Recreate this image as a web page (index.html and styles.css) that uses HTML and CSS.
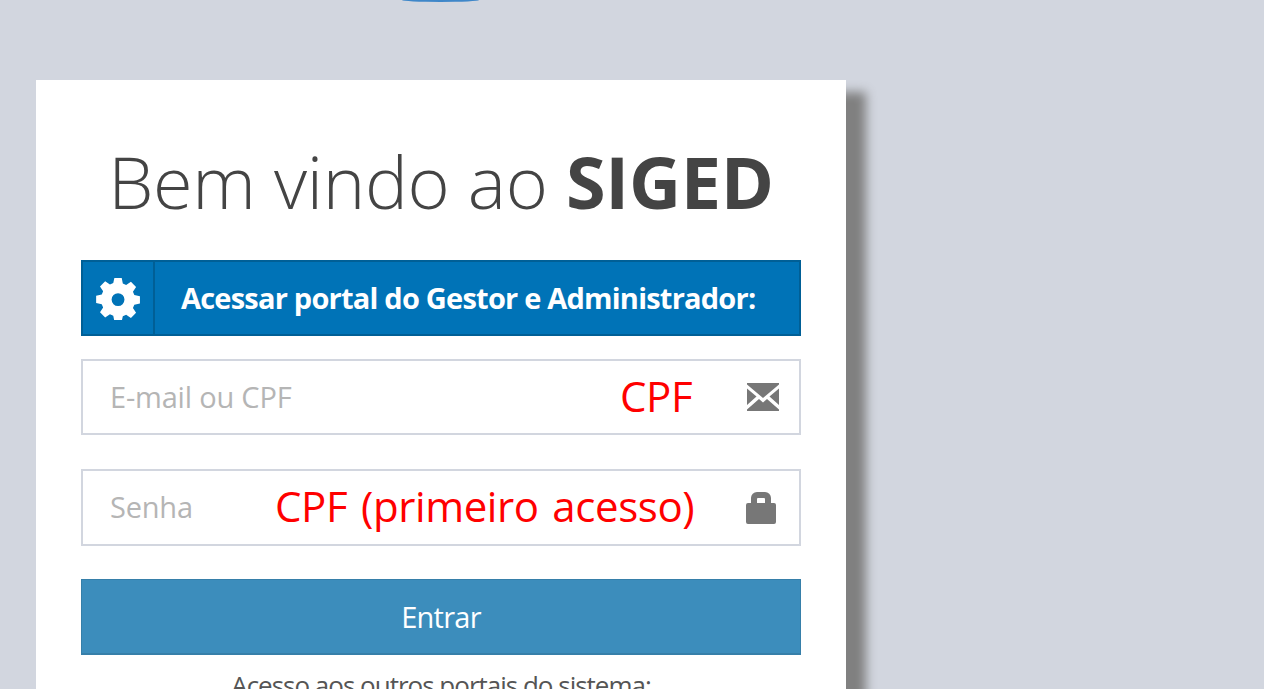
FILE: index.html
```html
<!DOCTYPE html>
<html lang="pt-BR">
<head>
    <meta charset="UTF-8">
    <title>SIGED</title>
    <link rel="stylesheet" href="styles.css">
</head>
<body>
    <div class="logo-edge"></div>

    <div class="login-box">
        <h1 class="login-title">Bem vindo ao <strong>SIGED</strong></h1>

        <div class="portal-bar">
            <span class="portal-icon">
                <svg width="44" height="44" viewBox="0 0 44 44">
                    <path fill="#fff" fill-rule="evenodd" d="M18 0h8l1.200 6.100 3.600 1.500L36 4.200l5.600 5.600-3.400 5.200 1.500 3.600 6.100 1.200v8l-6.100 1.200-1.500 3.600 3.400 5.200-5.600 5.600-5.200-3.400-3.600 1.500L26 47h-8l-1.200-6.100-3.600-1.500L8 42.800 2.400 37.200l3.400-5.200-1.500-3.600L-1.800 27.200v-8l6.100-1.200 1.500-3.600-3.400-5.200L8 3.600l5.200 3.400 3.600-1.500zM22 16.500a7 7 0 1 0 0 14 7 7 0 0 0 0-14z" transform="translate(1.800 2) scale(.92)"/>
                </svg>
            </span>
            <span class="portal-text">Acessar portal do Gestor e Administrador:</span>
        </div>

        <div class="field">
            <span class="field-label">E-mail ou CPF</span>
            <span class="field-note note-email">CPF</span>
            <svg class="field-icon" width="32" height="28" viewBox="0 0 32 28">
                <path fill="#777" d="M0 0h32v1.500L16 15 0 1.500zM0 5.500V22l9.500-8.500zM32 5.500V22l-9.500-8.500zM0 28v-1.500L12 16l4 3.500 4-3.500 12 10.500V28z"/>
            </svg>
        </div>

        <div class="field field-senha">
            <span class="field-label">Senha</span>
            <span class="field-note note-senha">CPF (primeiro acesso)</span>
            <svg class="field-icon icon-lock" width="30" height="32" viewBox="0 0 30 32">
                <path fill="#777" fill-rule="evenodd" d="M5 11V6a6 6 0 0 1 6-6h8a6 6 0 0 1 6 6v5h3a2 2 0 0 1 2 2v17a2 2 0 0 1-2 2H2a2 2 0 0 1-2-2V13a2 2 0 0 1 2-2zm6 0h8V7a1 1 0 0 0-1-1h-6a1 1 0 0 0-1 1z"/>
            </svg>
        </div>

        <button class="btn-enter">Entrar</button>

        <p class="other-portals">Acesso aos outros portais do sistema:</p>
    </div>
</body>
</html>
```

FILE: styles.css
```css
* {
    margin: 0;
    padding: 0;
    box-sizing: border-box;
}

html, body {
    height: 100%;
    overflow: hidden;
}

body {
    background-color: #d2d6df;
    font-family: "Open Sans", "Noto Sans", sans-serif;
    color: #444;
    position: relative;
    padding: 80px 0 0 36px;
}

.logo-edge {
    position: absolute;
    top: -2px;
    left: 402px;
    width: 77px;
    height: 4px;
    background-color: #3f87c9;
    border-radius: 0 0 50% 50%;
}

.login-box {
    width: 810px;
    height: 680px;
    background-color: #fff;
    padding: 0 45px;
    box-shadow: 20px 12px 10px #808080;
}

.login-title {
    font-family: "Open Sans", sans-serif;
    font-size: 72px;
    font-weight: 300;
    letter-spacing: -0.3px;
    line-height: 90px;
    text-align: center;
    color: #444;
    padding-top: 56px;
    height: 180px;
    white-space: nowrap;
}

.login-title strong {
    font-weight: 700;
}

.portal-bar {
    display: flex;
    align-items: stretch;
    height: 76px;
    background-color: #0073b7;
    border: 2px solid #005f96;
    color: #fff;
}

.portal-icon {
    width: 72px;
    display: flex;
    align-items: center;
    justify-content: center;
    border-right: 2px solid #005f96;
}

.portal-text {
    flex: 1;
    display: flex;
    align-items: center;
    padding-left: 26px;
    padding-bottom: 2px;
    font-size: 29px;
    font-weight: 700;
    letter-spacing: -0.78px;
    white-space: nowrap;
}

.field {
    position: relative;
    display: flex;
    align-items: center;
    justify-content: space-between;
    height: 76px;
    margin-top: 23px;
    padding: 0 20px 0 27px;
    border: 2px solid #d2d6df;
    background-color: #fff;
}

.field-senha {
    height: 77px;
    margin-top: 34px;
    padding-right: 23px;
}

.field-label {
    font-size: 29px;
    letter-spacing: -0.2px;
    color: #b5b5b5;
    position: relative;
    top: -1px;
}

.field-note {
    position: absolute;
    top: 7px;
    font-family: "Open Sans", sans-serif;
    font-size: 42px;
    line-height: 56px;
    letter-spacing: -0.4px;
    word-spacing: 3.2px;
    color: #f00;
    white-space: nowrap;
}

.note-email {
    left: 537px;
}

.note-senha {
    left: 192px;
}

.btn-enter {
    display: block;
    width: 100%;
    height: 76px;
    margin-top: 33px;
    background-color: #3c8dbc;
    border: 1px solid #367fa9;
    border-bottom-width: 2px;
    color: #fff;
    font-family: "Open Sans", sans-serif;
    font-size: 29px;
    letter-spacing: -0.75px;
}

.other-portals {
    margin-top: 12px;
    text-align: center;
    font-size: 26px;
    letter-spacing: -1px;
    color: #555;
    white-space: nowrap;
}
```
